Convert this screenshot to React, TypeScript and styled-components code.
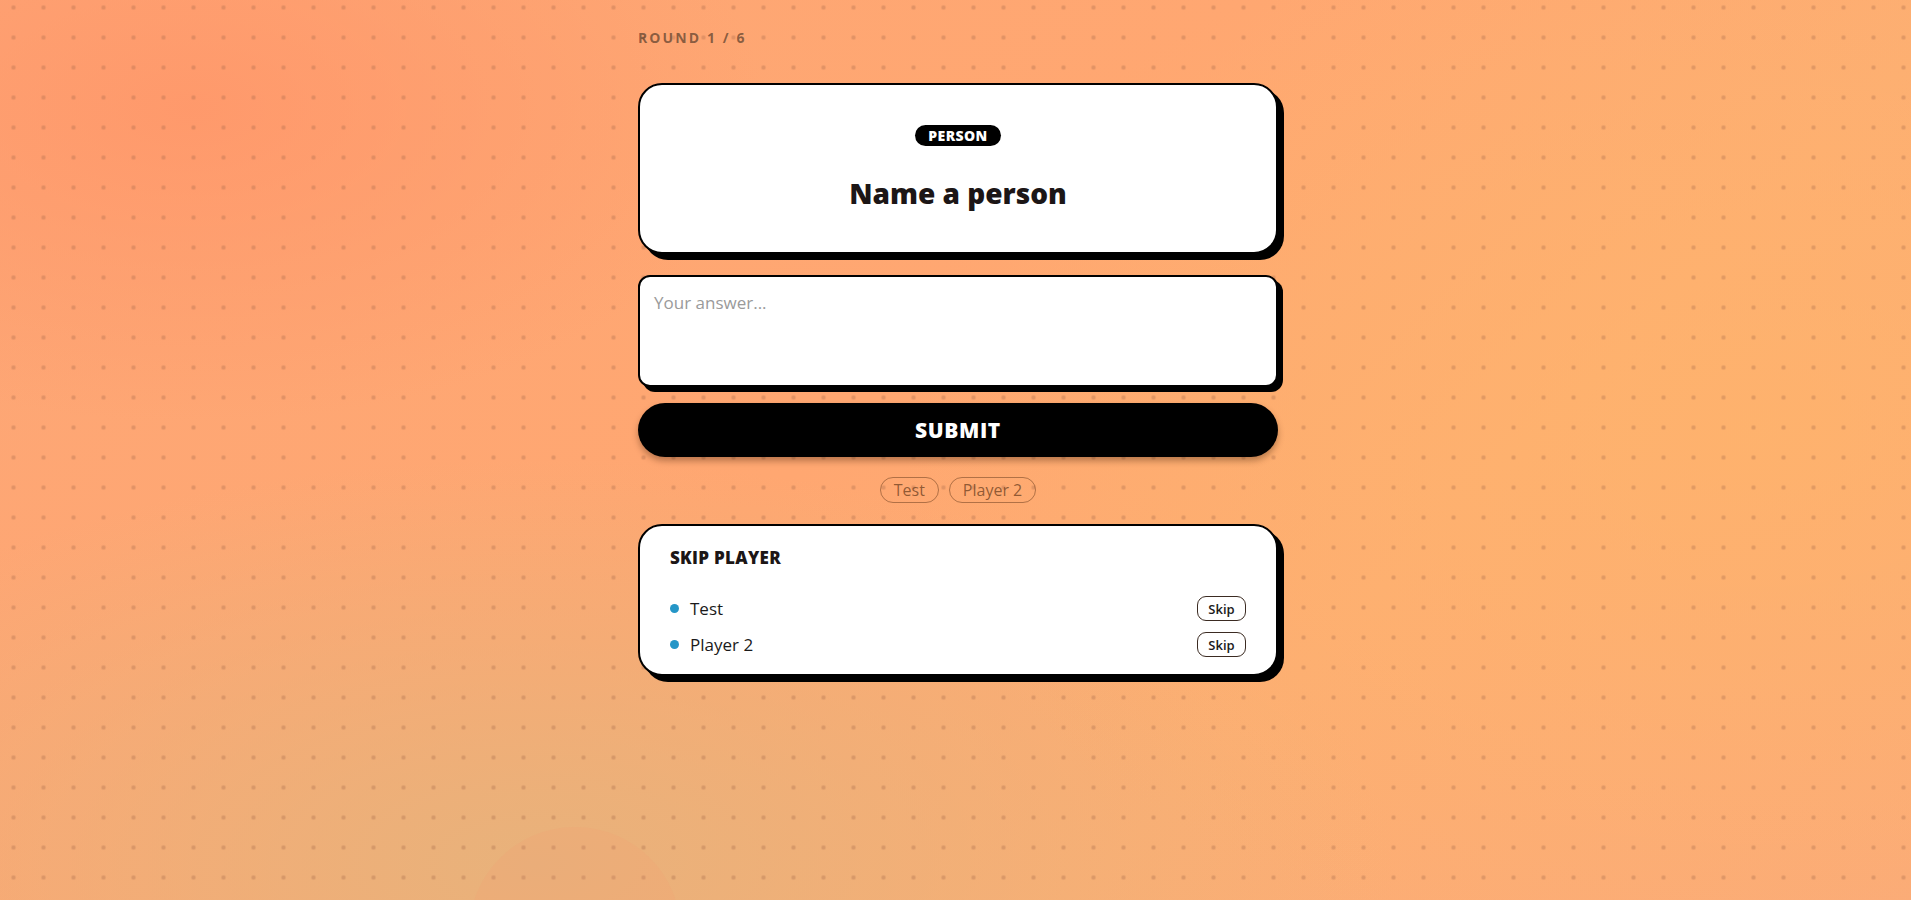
import React, { useState } from "react";
import styled, { createGlobalStyle } from "styled-components";

const GlobalStyle = createGlobalStyle`
  * {
    box-sizing: border-box;
  }
  html,
  body {
    margin: 0;
    padding: 0;
  }
  body {
    font-family: "Segoe UI", "Open Sans", "Noto Sans", sans-serif;
    color: #1a1a1a;
    background: #fda874;
  }
`;

const Page = styled.div`
  position: relative;
  overflow: hidden;
  min-height: 100vh;
  padding: 28px 0 40px 5px;
  display: flex;
  flex-direction: column;
  align-items: center;
  background-color: #fda874;
  background-image:
    radial-gradient(circle, rgba(160, 100, 70, 0.3) 1.8px, transparent 2.6px),
    radial-gradient(ellipse 30% 35% at 10% 12%, rgba(255, 150, 105, 0.8), transparent),
    radial-gradient(ellipse 45% 60% at 92% 48%, rgba(255, 180, 106, 0.7), transparent),
    radial-gradient(ellipse 45% 45% at 28% 96%, rgba(232, 178, 123, 1), transparent),
    linear-gradient(135deg, #fda676 0%, #ffa771 45%, #fdae73 70%, #fbab78 100%);
  background-size: 30px 30px, 100% 100%, 100% 100%, 100% 100%, 100% 100%;
  background-position: -1.5px -7.5px, 0 0, 0 0, 0 0, 0 0;
`;

const Blob = styled.div`
  position: absolute;
  left: 469px;
  top: 827px;
  width: 212px;
  height: 212px;
  border-radius: 50%;
  background: rgba(255, 140, 110, 0.1);
  pointer-events: none;
`;

const Column = styled.main`
  position: relative;
  width: 640px;
  display: flex;
  flex-direction: column;
  gap: 20px;
`;

const RoundLabel = styled.div`
  font-family: "Open Sans", sans-serif;
  font-size: 14px;
  line-height: 20px;
  font-weight: 700;
  letter-spacing: 2.1px;
  color: rgba(70, 50, 35, 0.64);
  margin-bottom: 15px;
`;

const Card = styled.section<{ $pad: string; $gapTop?: number }>`
  background: #fff;
  border: 2px solid #000;
  border-radius: 24px;
  box-shadow: 6px 6px 0 #000;
  padding: ${(p) => p.$pad};
  margin-top: ${(p) => p.$gapTop ?? 0}px;
`;

const PromptCard = styled(Card)`
  display: flex;
  flex-direction: column;
  align-items: center;
`;

const Badge = styled.span`
  display: inline-block;
  background: #000;
  color: #fff;
  font-family: "Open Sans", sans-serif;
  font-size: 14px;
  line-height: 17px;
  font-weight: 800;
  letter-spacing: 0.4px;
  padding: 2px 13px;
  border-radius: 999px;
`;

const Prompt = styled.h1`
  margin: 30px 0 0;
  font-family: "Open Sans", sans-serif;
  font-size: 28px;
  line-height: 34px;
  font-weight: 800;
  color: #1c1616;
`;

const Form = styled.form`
  display: flex;
  flex-direction: column;
  gap: 16px;
  margin-top: 1px;
`;

const Answer = styled.textarea`
  display: block;
  width: 100%;
  height: 112px;
  resize: none;
  border: 2px solid #000;
  border-radius: 12px;
  box-shadow: 5px 5px 0 #000;
  padding: 14px 14px;
  font-family: "Open Sans", sans-serif;
  font-size: 17px;
  line-height: 24px;
  color: #1a1a1a;
  background: #fff;
  outline: none;

  &::placeholder {
    color: #9a9a9a;
  }
`;

const Submit = styled.button`
  height: 54px;
  width: 100%;
  border: none;
  border-radius: 999px;
  background: #000;
  color: #fff;
  font-family: "Open Sans", sans-serif;
  font-size: 21px;
  font-weight: 800;
  letter-spacing: 0.6px;
  box-shadow: 0 4px 6px rgba(60, 30, 10, 0.35);
  cursor: pointer;
`;

const Chips = styled.div`
  display: flex;
  justify-content: center;
  gap: 10px;
`;

const Chip = styled.span`
  height: 26px;
  display: inline-flex;
  align-items: center;
  padding: 0 13px;
  border: 1px solid rgba(100, 55, 25, 0.5);
  border-radius: 999px;
  font-family: "Open Sans", sans-serif;
  font-size: 16px;
  color: rgba(95, 55, 25, 0.7);
`;

const SkipTitle = styled.h2`
  margin: 0 0 28px;
  font-family: "Open Sans", sans-serif;
  font-size: 17px;
  line-height: 20px;
  font-weight: 800;
  letter-spacing: 0.3px;
  color: #1c1616;
`;

const PlayerList = styled.ul`
  list-style: none;
  margin: 0;
  padding: 0;
  display: flex;
  flex-direction: column;
  gap: 11px;
`;

const PlayerRow = styled.li`
  display: flex;
  align-items: center;
  height: 25px;
`;

const Dot = styled.span`
  width: 9px;
  height: 9px;
  border-radius: 50%;
  background: #2596c7;
  margin-right: 11px;
  flex-shrink: 0;
`;

const PlayerName = styled.span`
  flex: 1;
  font-family: "Open Sans", sans-serif;
  font-size: 17px;
  color: #1a1a1a;
`;

const SkipButton = styled.button`
  height: 25px;
  width: 49px;
  padding: 0;
  border: 1.5px solid #3b2b22;
  border-radius: 9px;
  background: #fff;
  font-family: "Open Sans", sans-serif;
  font-size: 13px;
  font-weight: 600;
  color: #1a1a1a;
  cursor: pointer;
`;

const players = ["Test", "Player 2"];

export default function App() {
  const [answer, setAnswer] = useState("");

  return (
    <>
      <GlobalStyle />
      <Page>
        <Blob />
        <Column>
          <RoundLabel>ROUND 1 / 6</RoundLabel>
          <PromptCard $pad="40px 24px 42px">
            <Badge>PERSON</Badge>
            <Prompt>Name a person</Prompt>
          </PromptCard>
          <Form onSubmit={(e) => e.preventDefault()}>
            <Answer
              placeholder="Your answer..."
              value={answer}
              onChange={(e) => setAnswer(e.target.value)}
            />
            <Submit type="submit">SUBMIT</Submit>
          </Form>
          <Chips>
            {players.map((p) => (
              <Chip key={p}>{p}</Chip>
            ))}
          </Chips>
          <Card $pad="22px 30px 17px" $gapTop={1}>
            <SkipTitle>SKIP PLAYER</SkipTitle>
            <PlayerList>
              {players.map((p) => (
                <PlayerRow key={p}>
                  <Dot />
                  <PlayerName>{p}</PlayerName>
                  <SkipButton type="button">Skip</SkipButton>
                </PlayerRow>
              ))}
            </PlayerList>
          </Card>
        </Column>
      </Page>
    </>
  );
}
